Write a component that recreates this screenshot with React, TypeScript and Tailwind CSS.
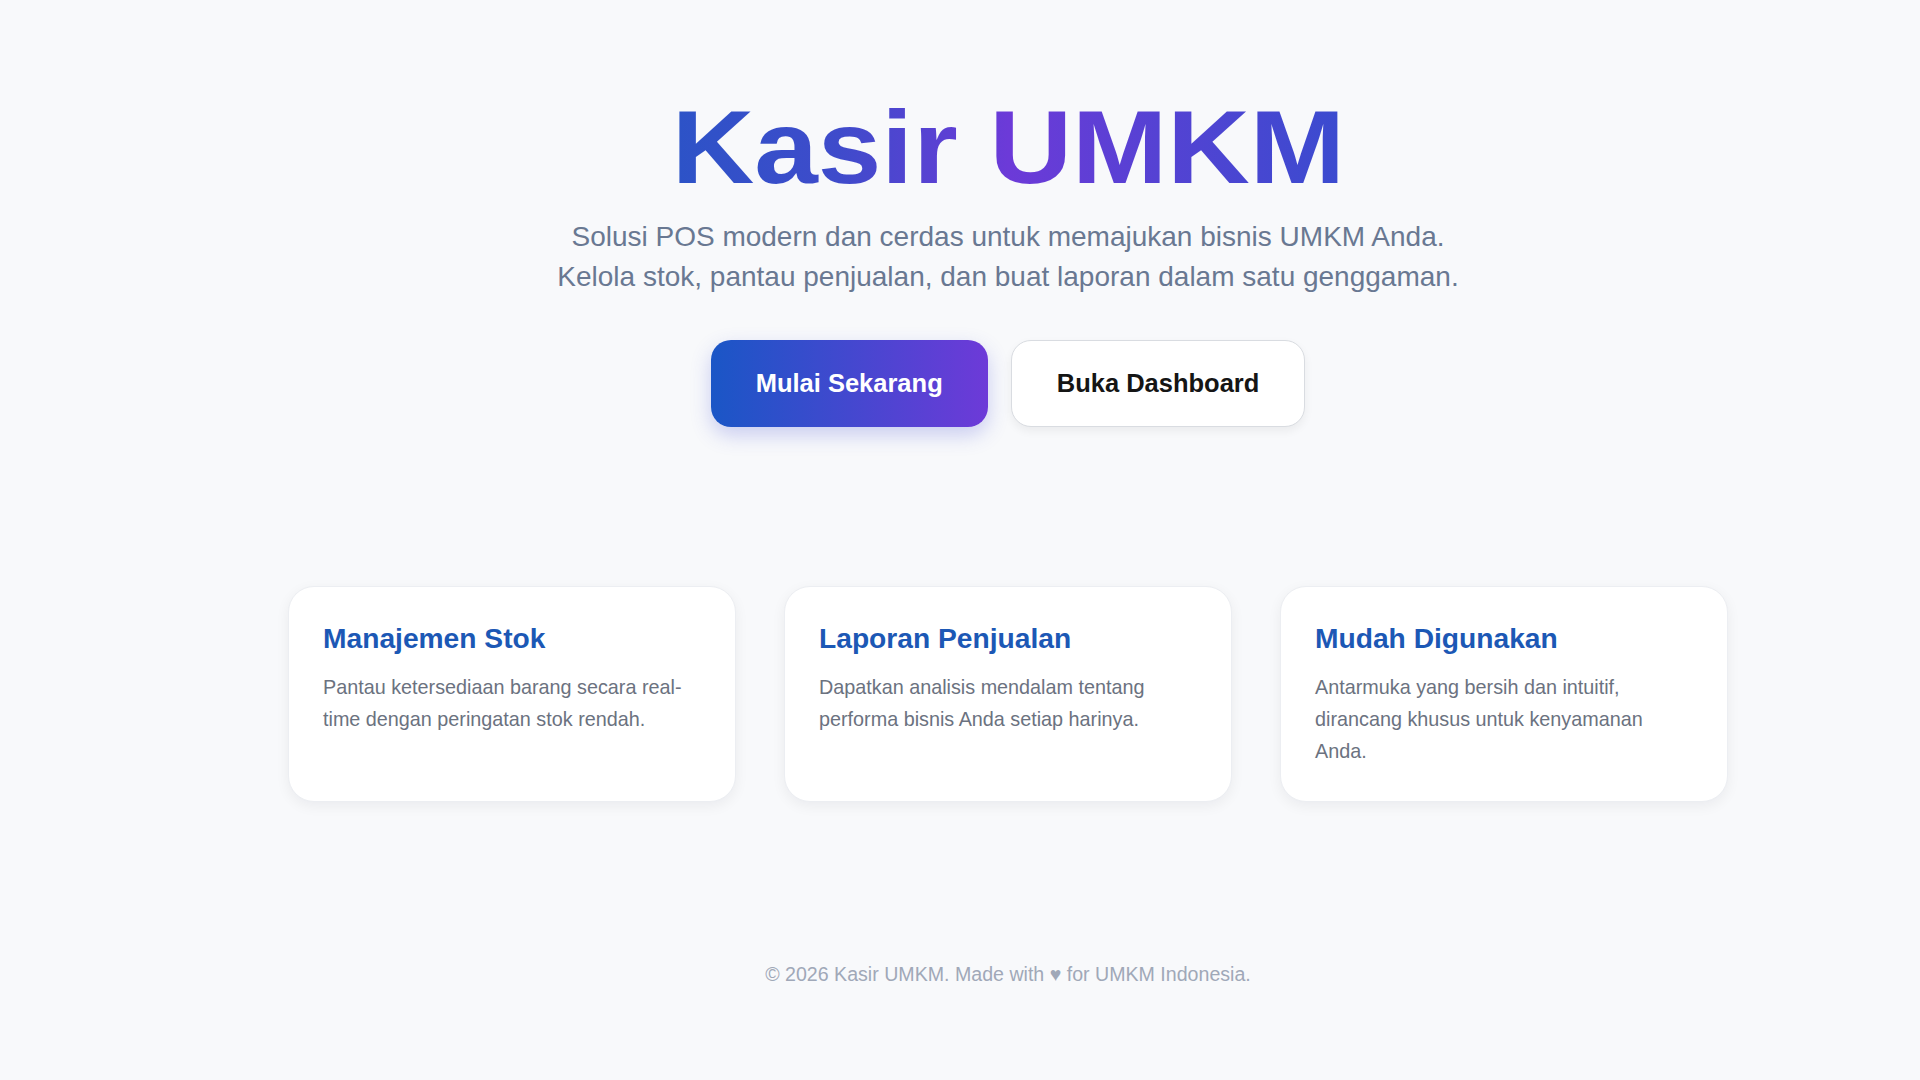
import React from "react";

const features = [
  {
    title: "Manajemen Stok",
    desc: "Pantau ketersediaan barang secara real-time dengan peringatan stok rendah.",
  },
  {
    title: "Laporan Penjualan",
    desc: "Dapatkan analisis mendalam tentang performa bisnis Anda setiap harinya.",
  },
  {
    title: "Mudah Digunakan",
    desc: "Antarmuka yang bersih dan intuitif, dirancang khusus untuk kenyamanan Anda.",
  },
];

export default function App() {
  return (
    <div
      className="min-h-screen w-full bg-[#f8f9fb] pl-[96px] pt-[96px] text-center"
      style={{ fontFamily: '"Liberation Sans", Arial, sans-serif' }}
    >
      <h1 className="mb-[18px] text-[103px] font-bold leading-none">
        <span className="inline-block scale-x-[1.11] bg-[linear-gradient(90deg,#2c53c7_0%,#3f4bcb_25%,#6c3ad8_50%,#5542d3_72%,#3a4bcf_100%)] bg-clip-text text-transparent">
          Kasir UMKM
        </span>
      </h1>
      <p className="text-[28px] leading-[40px] text-[#697892]">
        Solusi POS modern dan cerdas untuk memajukan bisnis UMKM Anda.
        <br />
        Kelola stok, pantau penjualan, dan buat laporan dalam satu genggaman.
      </p>
      <div className="mt-[43px] flex justify-center gap-[23px]">
        <button className="flex h-[87px] items-center rounded-[20px] bg-[linear-gradient(90deg,#1a56c6,#6d3ad8)] px-[45px] text-[25.5px] font-bold text-white shadow-[0_8px_20px_rgba(60,70,210,0.25)]">
          Mulai Sekarang
        </button>
        <button className="flex h-[87px] items-center rounded-[20px] border-[1.5px] border-[#d9dce1] bg-white px-[45px] text-[25.5px] font-bold text-[#151515] shadow-[0_4px_10px_rgba(0,0,0,0.06)]">
          Buka Dashboard
        </button>
      </div>
      <div className="mx-auto mt-[159px] grid max-w-[1440px] grid-cols-3 gap-[48px] text-left">
        {features.map((f) => (
          <div
            key={f.title}
            className="rounded-[26px] border border-[#eceef2] bg-white p-[34px] shadow-[0_4px_14px_rgba(15,23,42,0.06)]"
          >
            <h3 className="mb-[15px] text-[28.2px] font-bold leading-[35px] text-[#1c58b5]">
              {f.title}
            </h3>
            <p className="max-w-[370px] text-[19.8px] leading-[32px] text-[#6b7280]">
              {f.desc}
            </p>
          </div>
        ))}
      </div>
      <footer className="mt-[158px] pb-[60px] text-[19.6px] leading-[28px] text-[#a0a8b8]">
        © 2026 Kasir UMKM. Made with ♥ for UMKM Indonesia.
      </footer>
    </div>
  );
}
